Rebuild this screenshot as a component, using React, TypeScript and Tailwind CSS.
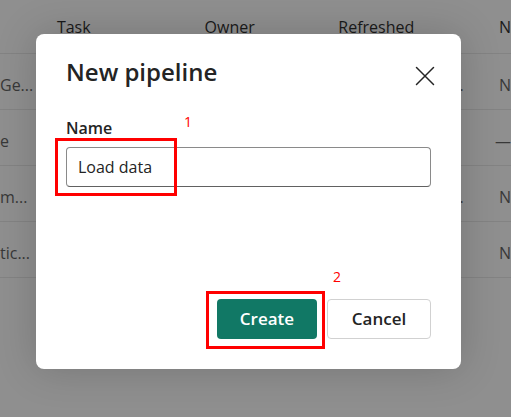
import React from "react";

const rows = [
  { a: "Ge...", r: "...", n: "N" },
  { a: "e", r: "", n: "—" },
  { a: "m...", r: "...", n: "N" },
  { a: "tic...", r: "", n: "N" },
];

export default function App() {
  return (
    <div className="relative w-[511px] h-[417px] overflow-hidden bg-[#8f8f8f] font-['Open_Sans',sans-serif]">
      {/* background table */}
      <div className="flex flex-col">
        <div className="flex h-[54px] items-center border-b border-[#838383] text-[16px] text-[#1a1a1a]">
          <div className="w-[57px]" />
          <div className="w-[148px]">Task</div>
          <div className="w-[134px]">Owner</div>
          <div className="w-[161px]">Refreshed</div>
          <div className="flex-1">N</div>
        </div>
        {rows.map((row, i) => (
          <div
            key={i}
            className="flex h-[56px] items-center border-b border-[#838383] text-[16px] text-[#383838] pt-[6px]"
          >
            <div className="w-[57px]">{row.a}</div>
            <div className="w-[148px]" />
            <div className="w-[134px]" />
            <div className="w-[161px] pl-[113px]">{row.r}</div>
            <div className="flex-1">{row.n}</div>
          </div>
        ))}
      </div>

      {/* dialog */}
      <div className="absolute left-[36px] top-[34px] w-[425px] h-[335px] bg-white rounded-[8px] shadow-[0_0_40px_rgba(0,0,0,0.18)] flex flex-col px-[30px] pt-[22px] pb-[30px] text-[#242424]">
        <div className="flex items-start justify-between">
          <div className="text-[24px] leading-[32px] font-semibold">New pipeline</div>
          <button className="mt-[8px] mr-[-6px] w-[24px] h-[24px] flex items-center justify-center">
            <svg width="24" height="24" viewBox="0 0 24 24">
              <path d="M3.5 3.5 L20.5 20.5 M20.5 3.5 L3.5 20.5" stroke="#242424" strokeWidth="1.5" strokeLinecap="round" />
            </svg>
          </button>
        </div>
        <div className="relative mt-[29px] text-[16px] leading-[22px] font-semibold">
          Name
          <span className="absolute left-[118px] top-[-6px] text-[14px] font-normal text-[#ff0000]">1</span>
        </div>
        <div className="relative mt-[8px]">
          <div className="h-[40px] border border-[#8a8a8a] border-b-[#616161] rounded-[4px] flex items-center pl-[11px] text-[16px]">
            Load data
          </div>
          <div className="absolute left-[-11px] top-[-9px] w-[122px] h-[58px] border-[3px] border-[#ff0000]" />
        </div>
        <div className="flex-1" />
        <div className="relative flex justify-end gap-[10px]">
          <div className="absolute left-[140px] top-[-8px] w-[119px] h-[58px] border-[3px] border-[#ff0000]" />
          <span className="absolute left-[267px] top-[-33px] text-[14px] text-[#ff0000]">2</span>
          <button className="relative w-[100px] h-[40px] rounded-[4px] bg-[#117865] text-white text-[17px] font-semibold">
            Create
          </button>
          <button className="w-[104px] h-[40px] rounded-[4px] bg-white border border-[#d1d1d1] text-[17px] font-semibold text-[#242424]">
            Cancel
          </button>
        </div>
      </div>
    </div>
  );
}
